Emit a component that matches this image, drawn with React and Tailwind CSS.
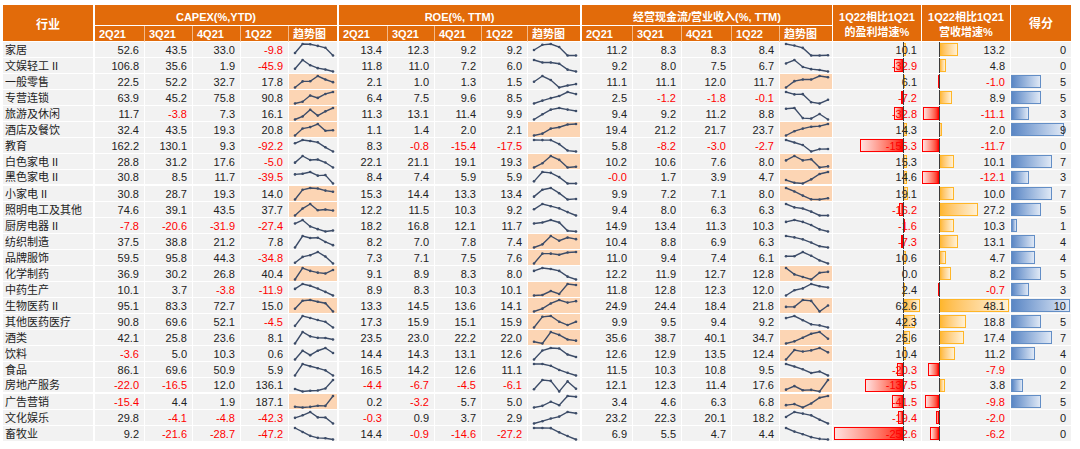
import React from 'react';

// name, capex, capex spark lead-in, capex highlight, roe..., cashflow..., profit yoy, revenue yoy, score
const rows = [
  ['家居', '52.6 43.5 33.0 -9.8', [4, 54], 0, '13.4 12.3 9.2 9.2', [11.2, 13.1], 0, '11.2 8.3 8.3 8.4', [12.7, 12.1], 0, '10.1', '13.2', 0],
  ['文娱轻工 II', '106.8 35.6 1.9 -45.9', [22, 234], 0, '11.8 11.0 7.2 6.0', [13.4, 11.8], 0, '9.2 8.0 7.5 6.7', [11.1, 13], 0, '-32.9', '4.8', 0],
  ['一般零售', '22.5 52.2 32.7 17.8', [-12, 22], 1, '2.1 1.0 1.3 1.5', [1.85, 2.7], 0, '11.1 11.1 12.0 11.7', [9.1, 10.7], 1, '6.1', '-1.0', 5],
  ['专营连锁', '63.9 45.2 75.8 90.8', [2, 16], 1, '6.4 7.5 9.6 8.5', [3.6, 5.1], 0, '2.5 -1.2 -1.8 -0.1', [3.5, 2.4], 0, '-7.2', '8.9', 5],
  ['旅游及休闲', '11.7 -3.8 7.3 16.1', [-14, -6], 1, '11.3 13.1 11.4 9.9', [0.7, 6.3], 0, '9.4 9.2 11.2 8.8', [13.5, 13.8], 0, '-32.8', '-11.1', 3],
  ['酒店及餐饮', '32.4 43.5 19.3 20.8', [2, 27], 1, '1.1 1.4 2.0 2.1', [-0.4, 0], 1, '19.4 21.2 21.7 23.7', [13, 17], 1, '14.3', '2.0', 9],
  ['教育', '162.2 130.1 9.3 -92.2', [106, 186], 0, '8.3 -0.8 -15.4 -17.5', [8.5, 8.3], 0, '5.8 -8.2 -3.0 -2.7', [16.8, 11.3], 0, '-155.3', '-11.7', 0],
  ['白色家电 II', '28.8 31.2 17.6 -5.0', [17, 47], 0, '22.1 21.1 19.1 19.3', [19.1, 20.2], 1, '10.2 10.6 7.6 8.0', [10.2, 11.8], 1, '15.3', '10.1', 7],
  ['黑色家电 II', '30.8 8.5 11.7 -39.5', [16, 20], 0, '8.4 7.4 5.9 5.9', [6.4, 8.6], 0, '-0.0 1.7 3.9 4.7', [1.4, 0.3], 1, '14.6', '-12.1', 3],
  ['小家电 II', '30.8 28.7 19.3 14.0', [-20, 23], 1, '15.3 14.4 13.3 13.4', [13.8, 15], 0, '9.9 7.2 7.1 8.0', [15.4, 12.9], 1, '19.1', '10.0', 7],
  ['照明电工及其他', '74.6 39.1 43.5 37.7', [10, 49], 1, '12.2 11.5 10.3 9.2', [11.2, 12.9], 0, '9.4 8.0 6.3 6.3', [11.4, 9.9], 0, '-16.2', '27.2', 5],
  ['厨房电器 II', '-7.8 -20.6 -31.9 -27.4', [6, 23], 0, '18.2 16.8 12.1 11.7', [16.2, 16.8], 0, '14.9 13.4 11.3 10.3', [14.9, 15.8], 0, '-1.6', '10.3', 1],
  ['纺织制造', '37.5 38.8 21.2 7.8', [-2, 46], 0, '8.2 7.0 7.8 7.4', [5.3, 6.1], 1, '10.4 8.8 6.9 6.3', [12.1, 11.4], 0, '-7.3', '13.1', 4],
  ['品牌服饰', '59.5 95.8 44.3 -34.8', [-27, 40], 0, '7.3 7.1 7.5 7.6', [5.5, 7.3], 1, '11.0 9.4 7.4 6.1', [9.2, 9.2], 0, '10.6', '4.7', 4],
  ['化学制药', '36.9 30.2 26.8 40.4', [4, 48], 1, '9.1 8.9 8.3 8.0', [8.9, 9.2], 0, '12.2 11.9 12.7 12.8', [13.25, 12.5], 1, '0.0', '8.2', 5],
  ['中药生产', '10.1 3.7 -3.8 -11.9', [3, 14], 0, '8.9 8.3 10.3 10.1', [8.0, 8.1], 1, '11.8 12.8 12.3 12.0', [10.2, 11.4], 0, '2.4', '-0.7', 3],
  ['生物医药 II', '95.1 83.3 72.7 15.0', [34, 90], 1, '13.3 14.5 13.6 14.1', [10.5, 11.5], 1, '24.9 24.4 18.4 21.8', [21, 21], 1, '62.6', '48.1', 10],
  ['其他医药医疗', '90.8 69.6 52.1 -4.5', [12, 110], 0, '17.3 15.9 15.1 15.9', [14.5, 17.1], 1, '9.9 9.5 9.4 9.2', [10.1, 10.3], 0, '42.3', '18.8', 5],
  ['酒类', '42.1 25.8 23.6 8.1', [-36, 90], 0, '23.5 23.0 22.2 22.0', [21.8, 21.5], 1, '35.6 38.7 40.1 34.7', [31, 32.7], 1, '25.6', '17.4', 7],
  ['饮料', '-3.6 5.0 10.3 0.6', [-12, 5], 0, '14.4 14.3 13.1 12.6', [12.1, 13.9], 0, '12.6 12.9 13.5 12.4', [10.6, 13], 1, '10.4', '11.2', 4],
  ['食品', '86.1 69.6 50.9 5.9', [6, 106], 0, '16.5 14.2 12.6 11.1', [17.5, 17.5], 0, '11.5 10.3 10.8 9.5', [13.2, 12.4], 0, '-20.3', '-7.9', 0],
  ['房地产服务', '-22.0 -16.5 12.0 136.1', [4, -32], 0, '-4.4 -6.7 -4.5 -6.1', [-6.2, -4.2], 0, '12.1 12.3 11.4 17.6', [12.4, 14.3], 1, '-137.5', '3.8', 2],
  ['广告营销', '-15.4 4.4 1.9 187.1', [-15, -28], 1, '0.2 -3.2 5.7 5.0', [-5.4, -3.8], 0, '3.4 4.6 6.3 6.8', [4.1, 4.4], 1, '-41.5', '-9.8', 5],
  ['文化娱乐', '29.8 -4.1 -4.8 -42.3', [-7, 9], 0, '-0.3 0.9 3.7 2.9', [-3.3, -1.9], 0, '23.2 22.3 20.1 18.2', [21.5, 24], 0, '-19.4', '-2.0', 0],
  ['畜牧业', '9.2 -21.6 -28.7 -47.2', [131, 70], 0, '14.4 -0.9 -14.6 -27.2', [15, 15], 0, '6.9 5.5 4.7 4.4', [9.8, 8.1], 0, '-252.6', '-6.2', 0],
];

const subs = ['2Q21', '3Q21', '4Q21', '1Q22', '趋势图'];

function Spark({ vals, w }) {
  const min = Math.min(...vals);
  const max = Math.max(...vals);
  const x0 = 6;
  const x1 = w - 4;
  const pts = vals.map((v, i) => [x0 + (i * (x1 - x0)) / 5, 2 + ((max - v) / (max - min || 1)) * 11.5]);
  return (
    <svg width={w} height={15} className="block">
      <polyline points={pts.map((p) => p.join(',')).join(' ')} fill="none" stroke="#3c4c68" strokeWidth="1.4" />
      {pts.map(([x, y], i) => (
        <circle key={i} cx={x} cy={y} r="1.3" fill="#3c4c68" />
      ))}
    </svg>
  );
}

const red = (s) => s.startsWith('-');

export default function App() {
  return (
    <div className="w-[1080px] h-[449px] bg-white pt-[5px] pl-[3px] font-['Liberation_Sans','Noto_Sans_CJK_SC',sans-serif] text-[11px] leading-none">
      <div className="grid grid-cols-[92px_50px_48px_48px_48px_50px_49px_47px_47px_46px_54px_51px_49px_50px_48px_53px_89px_89px_60px] grid-rows-[21px_16px_repeat(25,16px)] w-[1068px]">
        {/* Header */}
        <div className="row-span-2 border-r-2 border-b border-white bg-[#e26b0a] text-white font-bold text-[12px] flex items-center justify-center pt-[3px]">行业</div>
        <div className="col-span-5 border-r-2 border-b border-white bg-[#e26b0a] text-white font-bold flex items-end justify-center pb-[2px]">CAPEX(%,YTD)</div>
        <div className="col-span-5 border-r-2 border-b border-white bg-[#e26b0a] text-white font-bold flex items-end justify-center pb-[2px]">ROE(%, TTM)</div>
        <div className="col-span-5 border-r border-b border-white bg-[#e26b0a] text-white font-bold flex items-end justify-center pb-[2px]">经营现金流/营业收入(%, TTM)</div>
        <div className="row-span-2 border-r border-b border-white bg-[#e26b0a] text-white font-bold flex flex-col items-center justify-center gap-[4px] pt-[3px]">
          <span>1Q22相比1Q21</span>
          <span>的盈利增速%</span>
        </div>
        <div className="row-span-2 border-r border-b border-white bg-[#e26b0a] text-white font-bold flex flex-col items-center justify-center gap-[4px] pt-[3px]">
          <span>1Q22相比1Q21</span>
          <span>营收增速%</span>
        </div>
        <div className="row-span-2 border-b border-white bg-[#e26b0a] text-white font-bold text-[12px] flex items-center justify-center pt-[2px]">得分</div>
        {[0, 1, 2].map((g) =>
          subs.map((s, i) => (
            <div
              key={`${g}-${s}`}
              className={`${i === 4 ? (g === 2 ? 'border-r border-white' : 'border-r-2 border-white') : 'border-r border-[#f3b98a]'} border-b border-b-white bg-[#e26b0a] text-white font-bold flex items-center pl-[4px] pt-[1px]`}
            >
              {s}
            </div>
          ))
        )}

        {/* Body */}
        {rows.map((r, ri) => {
          const rb = ri === 8 || ri === 21 ? 'border-b-2' : 'border-b';
          const groups = [
            [r[1].split(' '), r[2], r[3], 48],
            [r[4].split(' '), r[5], r[6], 52],
            [r[7].split(' '), r[8], r[9], 52],
          ];
          const p = parseFloat(r[10]);
          const v = parseFloat(r[11]);
          const pw = Math.abs(p) * 0.275;
          const vw = Math.min(Math.abs(v) * 1.45, 17);
          return (
            <React.Fragment key={r[0]}>
              <div className={`${rb} border-r-2 border-white bg-[#f2f2f2] text-[#222] flex items-center pl-[2px] pt-[1px]`}>{r[0]}</div>
              {groups.map(([vals, lead, hl, w], gi) => (
                <React.Fragment key={gi}>
                  {vals.map((s, i) => (
                    <div
                      key={i}
                      className={`${rb} border-r border-white bg-[#f2f2f2] flex items-center justify-end pr-[5px] pt-[1px] ${red(s) ? 'text-[#ff0000]' : 'text-[#222]'}`}
                    >
                      {s}
                    </div>
                  ))}
                  <div className={`${rb} ${gi === 2 ? 'border-r' : 'border-r-2'} border-white ${hl ? 'bg-[#fcd5b4]' : 'bg-[#f2f2f2]'}`}>
                    <Spark vals={[...lead, ...vals.map(parseFloat)]} w={w} />
                  </div>
                </React.Fragment>
              ))}
              {/* profit growth with data bar */}
              <div className={`${rb} border-r border-white bg-[#f2f2f2] relative flex items-center justify-end pr-[4px] pt-[1px]`}>
                {p > 0 && (
                  <div className="absolute top-[1px] h-[13px] border border-[#ffb628] bg-linear-to-r from-[#ffb628] to-[#fff1d6]" style={{ left: 70, width: pw }} />
                )}
                {p < 0 && (
                  <div className="absolute top-[1px] h-[13px] border border-[#ff0000] bg-linear-to-l from-[#ff0000] to-[#ffe0e0]" style={{ left: 70 - pw, width: pw }} />
                )}
                <span className={`relative ${red(r[10]) ? 'text-[#ff0000]' : 'text-[#222]'}`}>{r[10]}</span>
                <div className="absolute top-0 bottom-0 left-[70px] w-px bg-[#3a3a3a]" />
              </div>
              {/* revenue growth with data bar */}
              <div className={`${rb} border-r border-white bg-[#f2f2f2] relative flex items-center justify-end pr-[5px] pt-[1px]`}>
                {v > 0 && (
                  <div className="absolute top-[1px] h-[13px] border border-[#ffb628] bg-linear-to-r from-[#ffb628] to-[#fff1d6]" style={{ left: 17, width: Math.abs(v) * 1.45 }} />
                )}
                {v < 0 && (
                  <div className="absolute top-[1px] h-[13px] border border-[#ff0000] bg-linear-to-l from-[#ff0000] to-[#ffe0e0]" style={{ left: 17 - vw, width: vw }} />
                )}
                <span className={`relative ${red(r[11]) ? 'text-[#ff0000]' : 'text-[#222]'}`}>{r[11]}</span>
                <div className="absolute top-0 bottom-0 left-[17px] w-px bg-[#3a3a3a]" />
              </div>
              {/* score */}
              <div className={`${rb} border-white bg-[#f2f2f2] relative flex items-center justify-end pr-[5px] pt-[1px] text-[#222]`}>
                {r[12] > 0 && (
                  <div className="absolute left-0 top-[1px] h-[13px] border border-[#638ec6] bg-linear-to-r from-[#5a86c4] to-[#dfe8f5]" style={{ width: r[12] * 5.9 }} />
                )}
                <span className="relative">{r[12]}</span>
              </div>
            </React.Fragment>
          );
        })}
      </div>
    </div>
  );
}
